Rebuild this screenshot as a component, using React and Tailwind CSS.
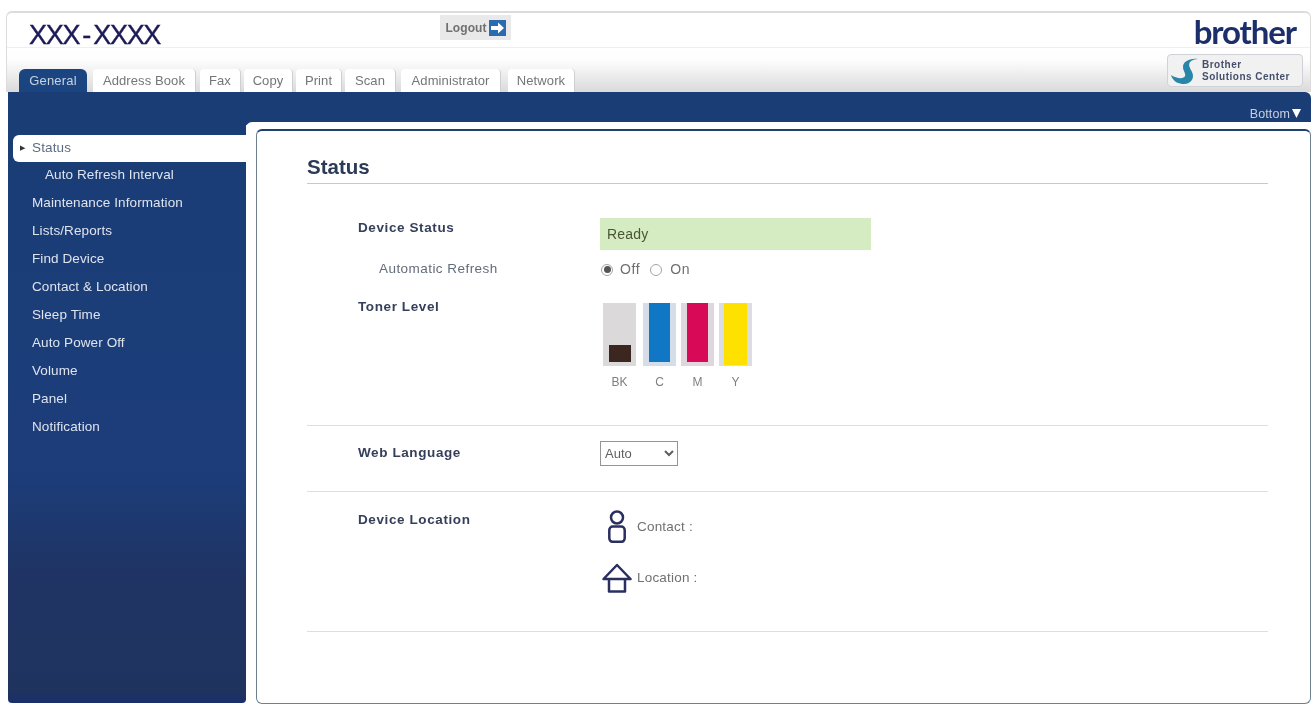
import React from "react";

const TABS = [
  { t: "Address Book", w: "w-[103px]", ml: "ml-[6px]" },
  { t: "Fax", w: "w-[41px]", ml: "ml-[4px]" },
  { t: "Copy", w: "w-[49px]", ml: "ml-[3px]" },
  { t: "Print", w: "w-[46px]", ml: "ml-[3px]" },
  { t: "Scan", w: "w-[51px]", ml: "ml-[3px]" },
  { t: "Administrator", w: "w-[100px]", ml: "ml-[5px]" },
  { t: "Network", w: "w-[67px]", ml: "ml-[7px]" },
];

const MENU = ["Maintenance Information", "Lists/Reports", "Find Device", "Contact & Location", "Sleep Time", "Auto Power Off", "Volume", "Panel", "Notification"];

const TONERS = [
  { l: "BK", track: "bg-[#dcd9da]", fill: "bg-[#3b2620]", w: "w-[22px]", h: "h-[17px]", mb: "mb-[4px]", gap: "" },
  { l: "C", track: "bg-[#d5dde8]", fill: "bg-[#0f77c4]", w: "w-[21px]", h: "h-[59px]", mb: "mb-[4px]", gap: "ml-[7px]" },
  { l: "M", track: "bg-[#e0d6de]", fill: "bg-[#d80a57]", w: "w-[21px]", h: "h-[59px]", mb: "mb-[4px]", gap: "ml-[5px]" },
  { l: "Y", track: "bg-[#dcdde3]", fill: "bg-[#ffe100]", w: "w-[23px]", h: "h-[62px]", mb: "mb-[1px]", gap: "ml-[5px]" },
];

function Radio({ on }) {
  return (
    <span className="flex h-[12px] w-[12px] items-center justify-center rounded-full border border-[#a5a5a5] bg-white">
      {on && <span className="h-[7px] w-[7px] rounded-full bg-[#555]" />}
    </span>
  );
}

function Label({ children, className = "" }) {
  return <div className={`w-[242px] text-[13.5px] font-bold tracking-[0.6px] text-[#353f5a] ${className}`}>{children}</div>;
}

export default function App() {
  return (
    <div className="h-[706px] w-[1315px] overflow-hidden bg-white pl-[6px] pr-[4px] pt-[11px] font-['Liberation_Sans',Arial,sans-serif] blur-[0.4px]">
      <div className="h-[81px] rounded-t-md border-x border-t-2 border-[#dcdcdc] bg-[linear-gradient(#ffffff_45%,#fdfdfd_60%,#dadada)]">
        <div className="flex h-[35px] items-start border-b border-[#efefef]">
          <div className="ml-[22px] mt-[7px] w-[411px] text-[27px] leading-[31px] tracking-[-1.3px] text-[#1c1a56] [word-spacing:-3px] [-webkit-text-stroke:0.4px_#1c1a56]">XXX - XXXX</div>
          <div className="mt-[2px] flex h-[25px] w-[71px] items-center justify-center gap-[2px] bg-[#e9e9e9] text-[12px] font-bold tracking-[0.1px] text-[#707070]">
            Logout
            <svg width="17" height="16" viewBox="0 0 17 16">
              <rect width="17" height="16" fill="#2b6cb0" />
              <path d="M2 6h7V2.5L15 8l-6 5.5V10H2z" fill="#fff" />
            </svg>
          </div>
          <div className="ml-auto mr-[14px] mt-[1px] text-[33px] font-bold leading-[34px] tracking-[-1.1px] text-[#1c2f6b] font-['Lato',sans-serif]">brother</div>
        </div>
        <div className="flex items-end">
          <div className="ml-[12px] mt-[21px] flex h-[23px] w-[68px] items-center justify-center rounded-t-md bg-[#1b4580] text-[13px] tracking-[0.2px] text-[#c9d2e0]">General</div>
          {TABS.map((x) => (
            <div key={x.t} className={`mt-[21px] flex h-[23px] items-center justify-center rounded-t-sm border-r border-[#cfcfcf] bg-white text-[13px] tracking-[0.1px] text-[#757575] ${x.w} ${x.ml}`}>{x.t}</div>
          ))}
          <div className="mb-[5px] ml-auto mr-[7px] flex h-[33px] w-[136px] items-center gap-[4px] rounded-sm border border-[#cfd2d6] bg-[#f1f1f1] pl-[3px] text-[10px] font-bold leading-[12px] tracking-[0.5px] text-[#44506b]">
            <svg width="27" height="26" viewBox="0 0 27 26">
              <path d="M27 1C18 0 12 4 12 9c0 4 3 6 2 9-1 3-8 3-14-1 2 7 8 9 13 9 7 0 11-6 8-12-2-4-4-7-2-10 2-2 5-3 8-3z" fill="#2a86a8" />
            </svg>
            <div>
              <div>Brother</div>
              <div>Solutions Center</div>
            </div>
          </div>
        </div>
      </div>

      <div className="ml-[2px] flex h-[33px] items-start justify-end rounded-tr-md bg-[#1a3d76] pr-[10px] pt-[14px]">
        <span className="text-[12.5px] leading-[16px] tracking-[0.1px] text-[#c6d0e0]">Bottom</span>
        <svg className="ml-[2px] mt-[3px]" width="9" height="9" viewBox="0 0 9 9"><path d="M0 0h9L4.5 9z" fill="#fff" /></svg>
      </div>

      <div className="-mt-[3px] ml-[2px] flex h-[582px]">
        <nav className="h-[581px] w-[238px] shrink-0 rounded-b-sm bg-[linear-gradient(#1a3d76,#1c3d7a_60%,#1f3464_78%,#1f335f_98%,#1a2f6b)] pt-[13px] text-[13.5px] tracking-[0.1px] text-[#dfe4ee]">
          <div className="ml-[5px] flex h-[27px] items-center rounded-l-md bg-white pl-[7px] text-[#5b6b83]">
            <span className="mr-[7px] text-[7px] text-[#333]">▶</span>Status
          </div>
          <div className="flex h-[27px] items-center pl-[37px]">Auto Refresh Interval</div>
          {MENU.map((m) => (
            <div key={m} className="flex h-[28px] items-center pl-[24px]">{m}</div>
          ))}
        </nav>

        <div className="flex-1 rounded-tl-md bg-white pl-[10px] pt-[7px]">
          <main className="h-[575px] rounded-md border border-[#6f8090] border-t-[#1f3f6f] border-t-2 pl-[50px] pr-[42px] pt-[23px]">
            <h1 className="border-b border-[#c9c9c9] pb-[3px] text-[20.5px] font-bold leading-[26px] text-[#2b3a55]">Status</h1>

            <div className="pl-[51px]">
              <div className="mt-[34px] flex">
                <Label>Device Status</Label>
                <div className="flex h-[32px] w-[271px] items-center bg-[#d5ecc2] pl-[7px] text-[14px] tracking-[0.2px] text-[#4a5536]">Ready</div>
              </div>
              <div className="mt-[9px] flex items-center">
                <div className="w-[242px] pl-[21px] text-[13.5px] tracking-[0.45px] text-[#636c7b]">Automatic Refresh</div>
                <div className="flex items-center pl-[1px] text-[14px] tracking-[0.6px] text-[#707070]">
                  <Radio on />
                  <span className="ml-[7px]">Off</span>
                  <span className="ml-[10px]"><Radio /></span>
                  <span className="ml-[8px]">On</span>
                </div>
              </div>
              <div className="mt-[19px] flex">
                <Label className="-mt-[2px]">Toner Level</Label>
                <div className="ml-[3px] mt-[4px]">
                  <div className="flex">
                    {TONERS.map((t) => (
                      <div key={t.l} className={`flex h-[63px] w-[33px] flex-col items-center justify-end ${t.track} ${t.gap}`}>
                        <div className={`${t.w} ${t.h} ${t.mb} ${t.fill}`} />
                      </div>
                    ))}
                  </div>
                  <div className="mt-[7px] flex text-[12px] text-[#808080]">
                    {TONERS.map((t) => (
                      <div key={t.l} className={`w-[33px] text-center ${t.gap}`}>{t.l}</div>
                    ))}
                  </div>
                </div>
              </div>
            </div>

            <div className="mt-[34px] flex h-[67px] border-y border-[#dedede] pl-[51px] pt-[15px]">
              <Label className="mt-[2px]">Web Language</Label>
              <select className="h-[25px] w-[78px] border border-[#949494] bg-white pl-0 text-[13px] text-[#5f5f5f]" defaultValue="Auto">
                <option>Auto</option>
              </select>
            </div>

            <div className="flex h-[140px] border-b border-[#dedede] pl-[51px] pt-[18px]">
              <Label>Device Location</Label>
              <div className="text-[13.5px] tracking-[0.2px] text-[#707070]">
                <div className="flex items-center">
                  <svg className="ml-[8px]" width="18" height="33" viewBox="0 0 18 33" fill="none" stroke="#2a2f5f" strokeWidth="2.5">
                    <circle cx="9" cy="7.5" r="6" />
                    <rect x="1.3" y="16.5" width="15.4" height="15.3" rx="3.5" />
                  </svg>
                  <span className="ml-[11px] mt-[2px]">Contact :</span>
                </div>
                <div className="mt-[20px] flex items-center">
                  <svg className="ml-[2px]" width="30" height="30" viewBox="0 0 30 30" fill="none" stroke="#2a2f5f" strokeWidth="2.5" strokeLinejoin="round">
                    <path d="M7 16H1.5L15 2l13.5 14H23M7 16v12.5h16V16M7 16h16" />
                  </svg>
                  <span className="ml-[5px]">Location :</span>
                </div>
              </div>
            </div>
          </main>
        </div>
      </div>
    </div>
  );
}
